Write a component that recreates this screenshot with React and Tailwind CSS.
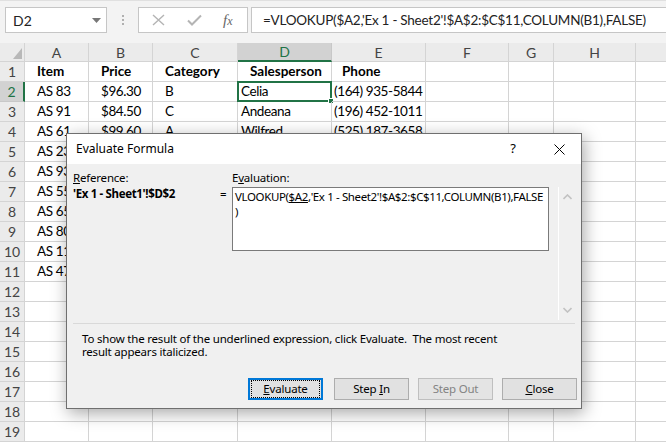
import React from "react";

const W = [25, 64, 64, 85, 94, 94, 83, 45, 82, 40];
const COLS = ["A", "B", "C", "D", "E", "F", "G", "H", ""];

const rows = [
  [["Item", 12, true], ["Price", 12, true], ["Category", 12, true], ["Salesperson", 12, true], ["Phone", 10, true]],
  [["AS 83", 12], ["$96.30", 12], ["B", 12], ["Celia", 3], ["(164) 935-5844", 2]],
  [["AS 91", 12], ["$84.50", 12], ["C", 12], ["Andeana", 3], ["(196) 452-1011", 2]],
  [["AS 61", 12], ["$99.60", 12], ["A", 12], ["Wilfred", 3], ["(525) 187-3658", 2]],
  [["AS 23", 12]],
  [["AS 93", 12]],
  [["AS 55", 12]],
  [["AS 65", 12]],
  [["AS 80", 12]],
  [["AS 11", 12]],
  [["AS 47", 12]],
];

function Cell({ w, children, className = "" }) {
  return (
    <div
      className={"relative shrink-0 box-border h-full border-r border-b border-[#d4d4d4] " + className}
      style={{ width: w }}
    >
      {children}
    </div>
  );
}

function TopBar() {
  return (
    <div className="h-[43px] bg-[#f3f3f3] border-t border-[#e0e0e0] flex items-start pt-[6px] pl-[5px]">
      <div className="w-[102px] h-[26px] bg-white border border-[#c6c6c6] flex items-center justify-between pl-[7px] pr-[5px] text-[14px] text-[#222]">
        <span>D2</span>
        <svg width="9" height="5" viewBox="0 0 9 5"><path d="M0 0 L9 0 L4.5 5 Z" fill="#777" /></svg>
      </div>
      <div className="w-[31px] h-[26px] flex flex-col items-center justify-center gap-[2px]">
        <span className="w-[2px] h-[2px] bg-[#b0b0b0]" />
        <span className="w-[2px] h-[2px] bg-[#b0b0b0]" />
        <span className="w-[2px] h-[2px] bg-[#b0b0b0]" />
      </div>
      <div className="w-[110px] h-[26px] bg-white border border-[#c6c6c6] flex items-center pl-[13px]">
        <svg width="13" height="12" viewBox="0 0 13 12">
          <path d="M1 1 L12 11 M12 1 L1 11" stroke="#b4b4b4" strokeWidth="1.4" fill="none" />
        </svg>
        <svg className="ml-[22px]" width="15" height="12" viewBox="0 0 15 12">
          <path d="M1 6.5 L5 10.5 L14 1.5" stroke="#b4b4b4" strokeWidth="2" fill="none" />
        </svg>
        <span className="ml-[21px] text-[15px] italic text-[#666] font-['Liberation_Serif',serif] leading-none">
          f<span className="text-[12px]">x</span>
        </span>
      </div>
      <div className="ml-[3px] flex-1 h-[26px] bg-white border border-[#c6c6c6] border-r-0 flex items-center pl-[11px] text-[13.5px] tracking-[-0.25px] text-[#222] whitespace-nowrap overflow-hidden">
        =VLOOKUP($A2,'Ex 1 - Sheet2'!$A$2:$C$11,COLUMN(B1),FALSE)
      </div>
    </div>
  );
}

function HeaderRow() {
  return (
    <div className="flex h-[19px]">
      <Cell w={W[0]} className="bg-[#ebebeb] border-[#c8c8c8]">
        <svg className="absolute right-[2px] bottom-[2px]" width="9" height="11" viewBox="0 0 9 11">
          <path d="M9 0 L9 11 L0 11 Z" fill="#b8b8b8" />
        </svg>
      </Cell>
      {COLS.map((c, i) => {
        const sel = c === "D";
        return (
          <Cell
            key={i}
            w={W[i + 1]}
            className={
              "flex items-center justify-center text-[14px] " +
              (sel
                ? "bg-[#d2d2d2] text-[#217346] border-b-2 border-b-[#217346] border-r-[#c8c8c8]"
                : "bg-[#ebebeb] text-[#444] border-[#c8c8c8]")
            }
          >
            {c}
          </Cell>
        );
      })}
    </div>
  );
}

function DataRow({ n, data }) {
  const selRow = n === 2;
  return (
    <div className="flex h-[20px]">
      <Cell
        w={W[0]}
        className={
          "flex items-center justify-center text-[14px] " +
          (selRow
            ? "bg-[#d2d2d2] text-[#217346] border-r-2 border-r-[#217346] border-b-[#c8c8c8]"
            : "bg-[#ebebeb] text-[#444] border-[#c8c8c8]")
        }
      >
        {n}
      </Cell>
      {COLS.map((c, i) => {
        const d = data ? data[i] : null;
        const isSel = selRow && c === "D";
        return (
          <Cell key={i} w={W[i + 1]} className="flex items-center overflow-visible">
            {d ? (
              <span
                className={
                  "whitespace-nowrap text-[13.5px] text-black " +
                  (d[2] ? "font-bold" : "tracking-[-0.4px]")
                }
                style={{ paddingLeft: d[1] }}
              >
                {d[0]}
              </span>
            ) : null}
            {isSel ? (
              <div className="absolute left-[-1px] top-[-1px] right-[-1px] bottom-[-1px] border-2 border-[#217346]">
                <div className="absolute right-[-4px] bottom-[-4px] w-[6px] h-[6px] bg-[#217346] border border-white" />
              </div>
            ) : null}
          </Cell>
        );
      })}
    </div>
  );
}

function Btn({ children, className = "", disabled, focused }) {
  return (
    <div
      className={
        "h-[22px] w-[75px] box-border flex items-center justify-center " +
        (focused
          ? "border-2 border-[#0078d7] bg-[#e1e1e1] text-black"
          : disabled
          ? "border border-[#bfbfbf] bg-[#e4e4e4] text-[#838383]"
          : "border border-[#adadad] bg-[#e1e1e1] text-black") +
        " " +
        className
      }
    >
      {focused ? (
        <div className="w-full h-full m-[1px] border border-dotted border-black flex items-center justify-center">
          {children}
        </div>
      ) : (
        children
      )}
    </div>
  );
}

function Dialog() {
  return (
    <div className="absolute left-[66px] top-[133px] w-[516px] h-[276px] border border-[#6f6f6f] bg-[#f0f0f0] shadow-[2px_4px_16px_rgba(0,0,0,0.35)] font-['Noto_Sans',sans-serif] text-[11.5px] tracking-[-0.2px] text-black flex flex-col">
      <div className="h-[30px] bg-white flex items-center pl-[9px] shrink-0 text-[12px] tracking-normal">
        <span className="flex-1">Evaluate Formula</span>
        <span className="w-[12px] text-[13px] mr-[35px] text-center">?</span>
        <svg className="mr-[16px]" width="11" height="11" viewBox="0 0 11 11">
          <path d="M0.5 0.5 L10.5 10.5 M10.5 0.5 L0.5 10.5" stroke="#000" strokeWidth="1" fill="none" />
        </svg>
      </div>
      <div className="flex pl-[6px] pt-[6px] shrink-0">
        <div className="w-[147px] leading-[16px]">
          <div>
            <span className="underline">R</span>eference:
          </div>
          <div className="font-bold whitespace-nowrap tracking-[-0.35px]">'Ex 1 - Sheet1'!$D$2</div>
        </div>
        <div className="w-[12px] pt-[16px] leading-[16px]">=</div>
        <div className="w-[317px]">
          <div className="leading-[16px] h-[17px]">
            E<span className="underline">v</span>aluation:
          </div>
          <div className="h-[64px] bg-white border border-[#7a7a7a] pl-[2px] pt-[1px] leading-[15px] whitespace-nowrap overflow-hidden tracking-[-0.38px]">
            <div>
              VLOOKUP(<span className="underline">$A2</span>,'Ex 1 - Sheet2'!$A$2:$C$11,COLUMN(B1),FALSE
            </div>
            <div>)</div>
          </div>
        </div>
        <div className="ml-[9px] mt-[17px] w-[17px] h-[133px] border-l border-white flex flex-col items-center justify-between py-[7px]">
          <svg width="9" height="6" viewBox="0 0 9 6">
            <path d="M0.5 5 L4.5 1 L8.5 5" stroke="#c2c2c2" strokeWidth="1.6" fill="none" />
          </svg>
          <svg width="9" height="6" viewBox="0 0 9 6">
            <path d="M0.5 1 L4.5 5 L8.5 1" stroke="#c2c2c2" strokeWidth="1.6" fill="none" />
          </svg>
        </div>
      </div>
      <div className="mt-[3px] ml-[6px] w-[502px] h-[1px] bg-[#d9d9d9] shrink-0" />
      <div className="pl-[15px] pt-[8px] leading-[13px] whitespace-nowrap">
        <div>To show the result of the underlined expression, click Evaluate.&nbsp; The most recent</div>
        <div>result appears italicized.</div>
      </div>
      <div className="flex pl-[181px] mt-[20px]">
        <Btn focused className="w-[73px] mr-[11px]">
          <span>
            <span className="underline">E</span>valuate
          </span>
        </Btn>
        <Btn className="mr-[9px]">
          <span>
            Step <span className="underline">I</span>n
          </span>
        </Btn>
        <Btn disabled className="mr-[9px]">
          Step Out
        </Btn>
        <Btn>
          <span>
            <span className="underline">C</span>lose
          </span>
        </Btn>
      </div>
    </div>
  );
}

export default function App() {
  return (
    <div className="relative w-[666px] h-[442px] overflow-hidden bg-white font-['Lato',sans-serif]">
      <TopBar />
      <HeaderRow />
      {Array.from({ length: 19 }).map((_, i) => (
        <DataRow key={i} n={i + 1} data={rows[i]} />
      ))}
      <Dialog />
    </div>
  );
}
